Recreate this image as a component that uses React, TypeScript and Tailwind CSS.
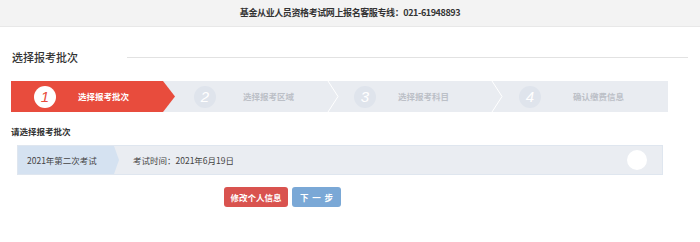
import React from "react";

const steps = [
  { num: "1", label: "选择报考批次", active: true, pad: "pl-[23px]", gap: "gap-[22px]" },
  { num: "2", label: "选择报考区域", active: false, pad: "pl-[19px]", gap: "gap-[27px]" },
  { num: "3", label: "选择报考科目", active: false, pad: "pl-[15px]", gap: "gap-[22px]" },
  { num: "4", label: "确认缴费信息", active: false, pad: "pl-[16px]", gap: "gap-[32px]" },
];

const font = { fontFamily: '"Noto Sans CJK SC", "Noto Sans", sans-serif' };

// 步骤条里非激活段之间的白色折线
const Chevron = () => (
  <svg className="absolute right-0 top-0" width="12" height="31" viewBox="0 0 12 31">
    <polyline points="1,0 11,15.5 1,31" fill="none" stroke="#ffffff" strokeWidth="1" />
  </svg>
);

export default function App() {
  return (
    <div className="w-[700px] h-[242px] bg-white text-[#333]" style={font}>
      {/* 顶部客服专线 */}
      <div className="h-[27px] bg-[#f3f3f3] border-b border-[#e8e8e8] flex items-center justify-center">
        <span className="text-[9px] font-bold tracking-[-0.4px] text-[#333]">
          基金从业人员资格考试网上报名客服专线：021-61948893
        </span>
      </div>

      {/* 标题 */}
      <div className="mt-[20px] h-[20px] flex items-center">
        <div className="w-[127px] pl-[12px] text-[11px] font-medium text-[#333]">选择报考批次</div>
        <div className="flex-1 h-px bg-[#e2e2e2] mr-[12px]" />
      </div>

      {/* 步骤条 */}
      <div className="mt-[14px] ml-[11px] w-[657px] h-[31px] bg-[#e9ecf1] grid grid-cols-[164px_164px_164px_165px]">
        {steps.map((s, i) => (
          <div
            key={s.num}
            className={
              "relative h-[31px] flex items-center " +
              s.pad +
              " " +
              s.gap +
              (s.active ? " bg-[#e84c3d] [clip-path:polygon(0_0,152px_0,164px_50%,152px_100%,0_100%)]" : "")
            }
          >
            <div
              className={
                "w-[22px] h-[22px] rounded-full flex items-center justify-center italic text-[15px] leading-none " +
                (s.active ? "bg-white text-[#e84c3d]" : "bg-[#dfe4ec] text-white")
              }
              style={{ fontFamily: '"Liberation Sans", Arial, sans-serif' }}
            >
              {s.num}
            </div>
            <span
              className={
                "text-[8.5px] font-bold " + (s.active ? "text-white" : "text-[#bcc0c7]")
              }
            >
              {s.label}
            </span>
            {!s.active && i < 3 && <Chevron />}
          </div>
        ))}
      </div>

      {/* 请选择报考批次 */}
      <div className="mt-[13px] ml-[11px] h-[12px] leading-[12px] text-[8.5px] font-bold text-[#333]">
        请选择报考批次
      </div>

      {/* 批次行 */}
      <div className="mt-[8px] ml-[17px] w-[646px] h-[30px] bg-[#eaedf2] border border-[#dfe6ef] flex items-center">
        <div className="w-[101px] h-full bg-[#d5e2f1] flex items-center pl-[9px] text-[8.5px] text-[#444] [clip-path:polygon(0_0,96px_0,101px_50%,96px_100%,0_100%)]">
          2021年第二次考试
        </div>
        <div className="ml-[14px] text-[8.5px] text-[#444]">考试时间：2021年6月19日</div>
        <div className="ml-auto mr-[15px] w-[20px] h-[20px] rounded-full bg-white" />
      </div>

      {/* 按钮 */}
      <div className="mt-[12px] ml-[224px] flex gap-[4px]">
        <button className="w-[64px] h-[20px] rounded-[3px] bg-[#d9534f] text-white text-[8.5px] font-bold flex items-center justify-center">
          修改个人信息
        </button>
        <button className="w-[49px] h-[20px] rounded-[3px] bg-[#7aa8d6] text-white text-[8.5px] font-bold flex items-center justify-center whitespace-pre">
          下  一  步
        </button>
      </div>
    </div>
  );
}
